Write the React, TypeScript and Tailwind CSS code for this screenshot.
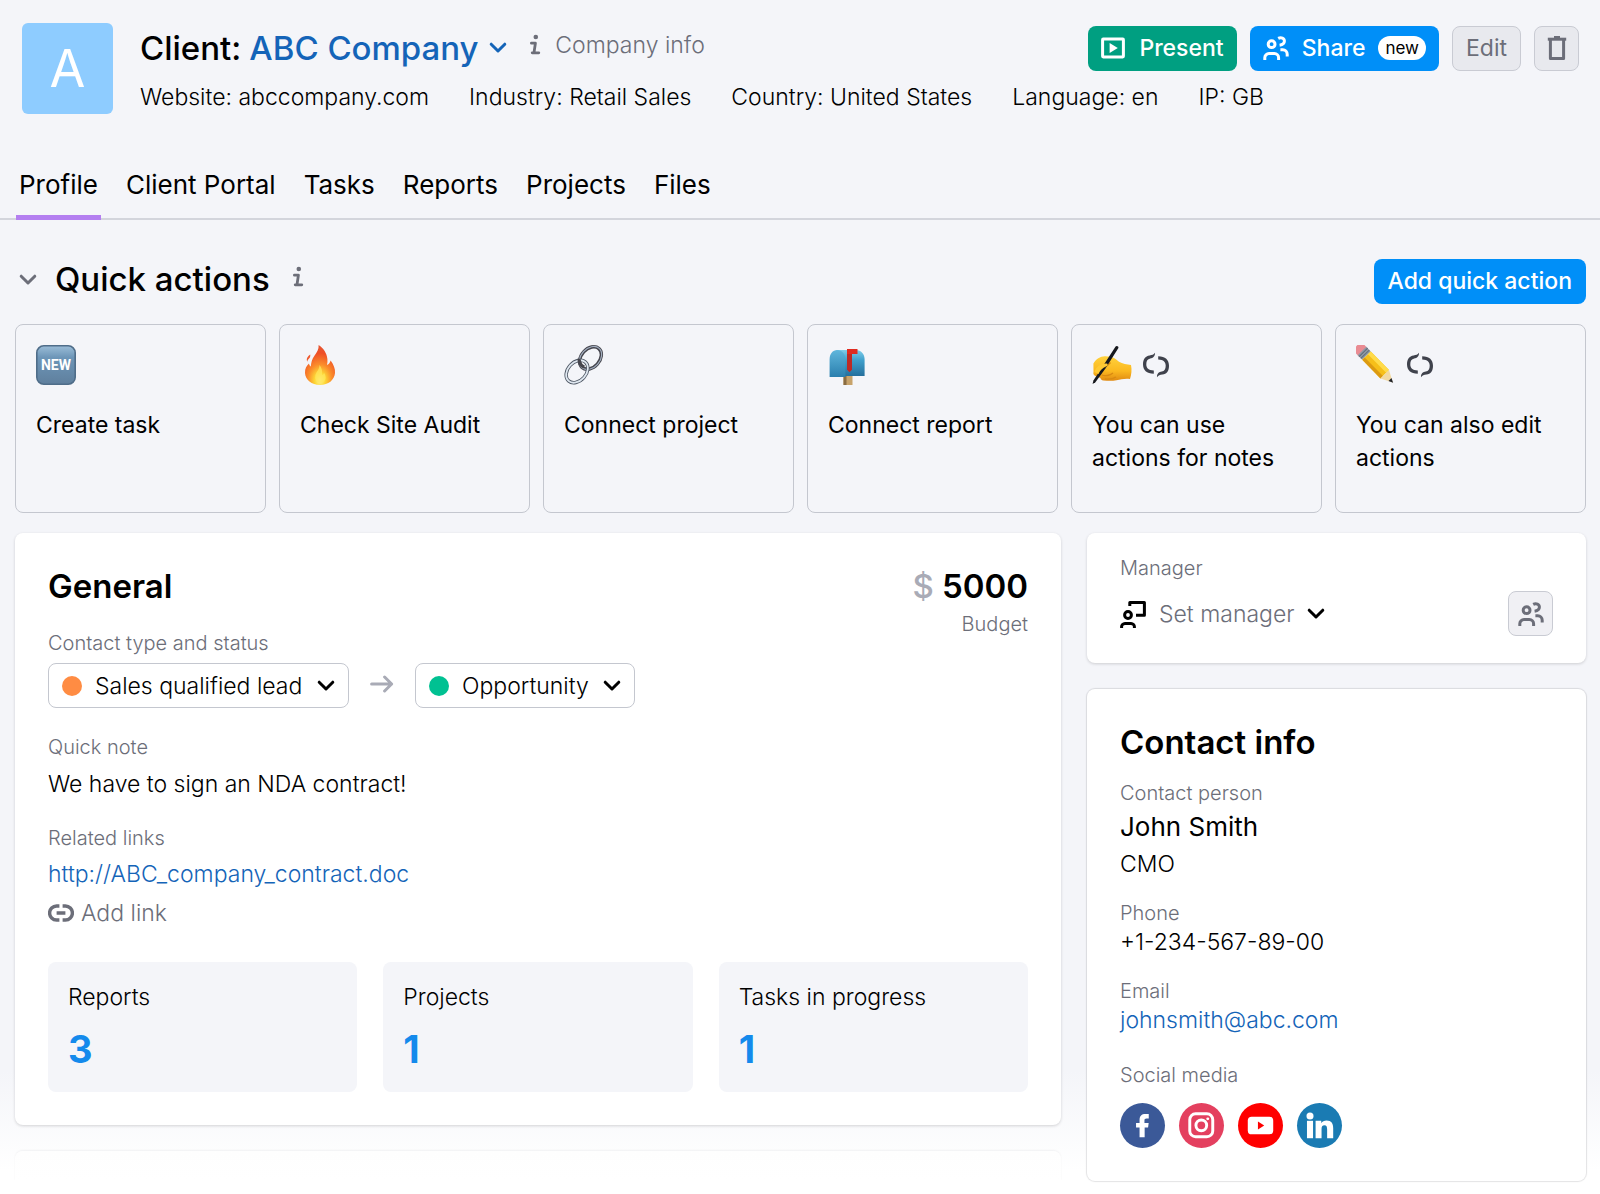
import type { ReactNode } from "react"

const details = [
  { label: "Website", value: "abccompany.com" },
  { label: "Industry", value: "Retail Sales" },
  { label: "Country", value: "United States" },
  { label: "Language", value: "en" },
  { label: "IP", value: "GB" },
]

const tabs = ["Profile", "Client Portal", "Tasks", "Reports", "Projects", "Files"]

const stats = [
  { label: "Reports", value: 3 },
  { label: "Projects", value: 1 },
  { label: "Tasks in progress", value: 1 },
]

function Chevron({ className = "" }: { className?: string }) {
  return (
    <svg viewBox="0 0 18 12" className={`h-3 w-[18px] shrink-0 pointer-events-none ${className}`} fill="none" aria-hidden="true">
      <path d="M2.2 2.2 9 9l6.8-6.8" stroke="currentColor" strokeWidth="3" strokeLinecap="round" strokeLinejoin="round" />
    </svg>
  )
}

function InfoIcon() {
  return (
    <svg viewBox="0 0 12 22" className="h-[22px] w-3 shrink-0 text-[#6c6e79]" fill="none" aria-hidden="true">
      <circle cx="6.8" cy="3" r="2.3" fill="currentColor" />
      <path d="M2.400 9.2h4L5 18.6M3.200 18.800h6.600" stroke="currentColor" strokeWidth="2.8" strokeLinecap="round" strokeLinejoin="round" />
    </svg>
  )
}

function UsersIcon() {
  return (
    <svg viewBox="0 0 26 26" className="h-[26px] w-[26px] shrink-0" fill="none" stroke="currentColor" strokeWidth="3" aria-hidden="true">
      <circle cx="8.6" cy="9.2" r="3.4" />
      <path d="M1.8 25v-2.2a4.2 4.2 0 0 1 4.2-4.2h5.4a4.2 4.2 0 0 1 4.2 4.2V25" />
      <path d="M15.2 3.4c3-1.6 6.2-.2 6.2 2.6 0 2.6-1.8 3.8-4.8 4.2" />
      <path d="M17.4 14.8h2.4a4.4 4.4 0 0 1 4.4 4.4v2.4" />
    </svg>
  )
}

function PresentIcon() {
  return (
    <svg viewBox="0 0 24 22" className="h-[22px] w-6 shrink-0" fill="none" aria-hidden="true">
      <rect x="1.6" y="2.1" width="20.8" height="17.8" rx="0.6" stroke="currentColor" strokeWidth="3" />
      <path d="M8.6 6v10l8.2-5z" fill="currentColor" />
    </svg>
  )
}

function TrashIcon() {
  return (
    <svg viewBox="0 0 20 26" className="h-[26px] w-5" fill="none" stroke="currentColor" strokeWidth="3" aria-hidden="true">
      <path d="M0.8 4.2h18.4" />
      <path d="M7 2.2h6" strokeWidth="2.4" />
      <path d="M3.4 4v19.4h13.2V4" strokeLinejoin="round" />
    </svg>
  )
}

function ManagerIcon() {
  return (
    <svg viewBox="0 0 26 28" className="h-7 w-[26px] shrink-0 text-black" fill="none" stroke="currentColor" strokeWidth="3" aria-hidden="true">
      <circle cx="8" cy="15" r="3.4" />
      <path d="M1.6 28v-1a3.4 3.4 0 0 1 3.4-3.6h6a3.4 3.4 0 0 1 3.4 3.6v1" />
      <path d="M9.8 6V2.6h14.6v12.6H16" strokeLinejoin="round" />
    </svg>
  )
}

function LinkIcon() {
  return (
    <svg viewBox="0 0 26 20" className="h-5 w-[26px] shrink-0" fill="none" stroke="currentColor" strokeWidth="3.4" aria-hidden="true">
      <path d="M11.4 3H8.600a7 7 0 0 0 0 14h2.800M14.600 3h2.800a7 7 0 0 1 0 14h-2.800M8.6 10h8.8" />
    </svg>
  )
}

function LoopIcon() {
  return (
    <svg viewBox="0 0 28 26" className="h-[26px] w-7" fill="#3f424c" aria-hidden="true">
      <path d="M13 .8c.2 3.600-2 5.400-4.800 5.700C5.600 7 4.300 9 4.300 12.300c0 3.900 2.200 6 7.500 6.300v3.200C4.600 21.800 1 18 1 12.300 1 7.200 3.200 4 7.600 3.400 10 3.100 11.600 2.800 13 .8z" />
      <path d="M15 25.200c-.2-3.600 2-5.400 4.800-5.700 2.600-.5 3.900-2.500 3.900-5.800 0-3.900-2.200-6-7.500-6.300V4.200C23.400 4.200 27 8 27 13.700c0 5.100-2.200 8.300-6.600 8.900-2.400.3-4 .6-5.400 2.600z" />
    </svg>
  )
}

function ArrowIcon() {
  return (
    <svg viewBox="0 0 24 18" className="h-[18px] w-6 shrink-0 text-[#a9abb6]" fill="none" stroke="currentColor" strokeWidth="3" strokeLinecap="round" strokeLinejoin="round" aria-hidden="true">
      <path d="M1.600 9h20M14.600 2l7 7-7 7" />
    </svg>
  )
}

function NewEmoji() {
  return (
    <svg viewBox="0 0 40 40" className="h-10 w-10" aria-hidden="true">
      <defs>
        <linearGradient id="newBg" x1="0" y1="0" x2="0" y2="1">
          <stop offset="0" stopColor="#9bbdd8" />
          <stop offset="0.3" stopColor="#6d96b8" />
          <stop offset="1" stopColor="#5f7f9d" />
        </linearGradient>
      </defs>
      <rect x="0.800" y="0.800" width="38.400" height="38.400" rx="7" fill="url(#newBg)" stroke="#4f6d89" strokeWidth="1.600" />
      <text x="20" y="25" textAnchor="middle" fontFamily="Roboto, sans-serif" fontWeight="700" fontSize="14" fill="#fff">NEW</text>
    </svg>
  )
}

function FireEmoji() {
  return (
    <svg viewBox="0 0 40 40" className="h-10 w-10" aria-hidden="true">
      <defs>
        <radialGradient id="fireBg" cx="0.5" cy="0.88" r="0.8">
          <stop offset="0" stopColor="#fff59a" />
          <stop offset="0.22" stopColor="#fdd835" />
          <stop offset="0.5" stopColor="#fb8c2b" />
          <stop offset="0.85" stopColor="#ee4f27" />
          <stop offset="1" stopColor="#e8542f" />
        </radialGradient>
      </defs>
      <path d="M18.600 0c5 3 8.200 8.400 8.800 14 .2 2.200 0 4.200-.4 6 2-1 3-2.600 3.600-4.600 3 4 4.800 8.200 4.400 12.600C34.400 35 28.400 40 20 40S5.400 34.800 5 28c-.2-4.400 1.800-7.400 4-9.400.2 1.400.8 2.400 1.800 3 .4-4 1-7.600 3.800-11.200C17 7.200 19 4.200 18.600 0z" fill="url(#fireBg)" />
      <path d="M10.200 9.400c.6 2.400-.8 3.600-2 5.200-.6.800-.8 1.400-.8 2.200-1.600-2.800.2-5.600 2.800-7.400z" fill="#ef5a30" />
      <path d="M19.400 20c.4 5-4.200 7-4.200 12 0 3.400 2 5.800 5 5.800s5.400-2 5.400-5.400c0-2-.8-3.400-1.600-4.600-.4 1.400-1 2-1.800 2.200.2-4-.4-7.600-2.800-10z" fill="#ffe65c" opacity="0.75" />
    </svg>
  )
}

function ChainEmoji() {
  return (
    <svg viewBox="0 0 40 40" className="h-10 w-10" fill="none" aria-hidden="true">
      <g transform="rotate(-48 26.500 13)">
        <ellipse cx="26.500" cy="13" rx="12.600" ry="9.200" stroke="#45454d" strokeWidth="3.400" />
        <ellipse cx="26.500" cy="13" rx="12.900" ry="9.500" stroke="#a3afc0" strokeWidth="1.200" />
      </g>
      <g transform="rotate(-48 13 26.500)">
        <ellipse cx="13" cy="26.500" rx="12.600" ry="9.200" stroke="#4d5663" strokeWidth="3.400" />
        <ellipse cx="13" cy="26.500" rx="12.600" ry="9.200" stroke="#dfe7f0" strokeWidth="1.800" />
      </g>
      <path d="M15.200 14c-.3 3.500 1.600 6.600 5 8" stroke="#45454d" strokeWidth="3.400" />
    </svg>
  )
}

function MailboxEmoji() {
  return (
    <svg viewBox="0 0 40 40" className="h-10 w-10" aria-hidden="true">
      <defs>
        <linearGradient id="boxSide" x1="0" y1="0" x2="0" y2="1">
          <stop offset="0" stopColor="#7fcdea" />
          <stop offset="0.4" stopColor="#3f9fcb" />
          <stop offset="1" stopColor="#256f9c" />
        </linearGradient>
        <linearGradient id="boxFront" x1="0" y1="0" x2="0" y2="1">
          <stop offset="0" stopColor="#5fb6dc" />
          <stop offset="1" stopColor="#2a7fae" />
        </linearGradient>
      </defs>
      <rect x="15.500" y="30" width="9" height="10" fill="#c7a36b" />
      <rect x="15.500" y="30" width="3" height="10" fill="#8a6c42" />
      <path d="M8 5h20c5 0 8.600 4 8.600 9v17H17V14z" fill="url(#boxSide)" />
      <path d="M1.600 32V14c0-5 3-9 7.600-9s8.200 4 8.200 9v18z" fill="url(#boxFront)" />
      <path d="M19 4h10.500v5H24v15.500L21.500 27 19 24.500z" fill="#e02b20" />
      <path d="M19 9h5v15.500L21.500 27 19 24.500z" fill="#bd2a25" />
    </svg>
  )
}

function WritingEmoji() {
  return (
    <svg viewBox="0 0 40 40" className="h-10 w-10" aria-hidden="true">
      <defs>
        <linearGradient id="handBg" x1="0" y1="0" x2="0" y2="1">
          <stop offset="0" stopColor="#ffd23d" />
          <stop offset="0.6" stopColor="#fbb81f" />
          <stop offset="1" stopColor="#e08a12" />
        </linearGradient>
      </defs>
      <path d="M1.400 18.500c2.600-4.500 7-7.500 12-7.300 5.600.2 9.600 1.400 13.600 5.600 3.500 2.200 8 2.700 12 3.200 1 4.500.5 9.500-1 14-6-.5-9 .5-13.500 1.200-4.500 1-8.500.6-13 .3-2-.3-3-1.200-3-2.500l-5-2c-2-.8-2.500-2.200-2-4z" fill="url(#handBg)" />
      <path d="M9 24c4-2 7-3 9.500-6.500M10 30c3 1.500 8 .5 11-2M13 34c4 .5 8 0 11-2" stroke="#d98a12" strokeWidth="1.300" fill="none" />
      <path d="M23.600 1.600c.8-1.300 3.400-.2 2.800 1.400L13.800 23 11 21z" fill="#16181d" />
      <path d="m11 21 2.800 2L3.400 37.200.6 39l.8-3.400z" fill="#16181d" />
      <path d="M2.500 27c1.500-5.500 6-8.500 11.500-8.500 2 0 2.500 2 .5 2.800C11 22.800 8 25 6.500 29z" fill="#ffca34" />
    </svg>
  )
}

function PencilEmoji() {
  return (
    <svg viewBox="0 0 40 40" className="h-10 w-10" aria-hidden="true">
      <g transform="rotate(45.500 3.500 3.500)">
        <path d="M4-2.500h5v12H4a5 6 0 0 1-4.500-6A5 6 0 0 1 4-2.500z" fill="#e98b93" />
        <rect x="7" y="-2.500" width="6.500" height="12" fill="#8f99a6" />
        <path d="M9-2.500v12M11.500-2.500v12" stroke="#5f6b78" strokeWidth="1" />
        <rect x="13.500" y="-2.500" width="26" height="12" fill="#f6bf1a" />
        <rect x="13.500" y="-2.500" width="26" height="4" fill="#ffdb4a" />
        <rect x="13.500" y="6" width="26" height="3.500" fill="#dc9a12" />
        <path d="M39.500-2.500 51 3.500l-11.500 6z" fill="#f2d9a2" />
        <path d="M47 1.400 51.500 3.500 47 5.600z" fill="#23252b" />
      </g>
    </svg>
  )
}

const actions = [
  { title: "Create task", emoji: <NewEmoji />, loop: false },
  { title: "Check Site Audit", emoji: <FireEmoji />, loop: false },
  { title: "Connect project", emoji: <ChainEmoji />, loop: false },
  { title: "Connect report", emoji: <MailboxEmoji />, loop: false },
  { title: "You can use actions for notes", emoji: <WritingEmoji />, loop: true },
  { title: "You can also edit actions", emoji: <PencilEmoji />, loop: true },
]

const socials = [
  {
    name: "Facebook",
    color: "bg-[#3b5998]",
    icon: <path d="M20 35V25h-3.600v-4.600H20v-3.200c0-4 2.200-6 6-6h3.400v4.600h-2.200c-1.600 0-2.200.7-2.200 2v2.600h4.300l-.6 4.600H25.200v10z" fill="#fff" />,
  },
  {
    name: "Instagram",
    color: "bg-[#e4405f]",
    icon: (
      <g fill="none" stroke="#fff" strokeWidth="3">
        <rect x="11" y="11" width="23.500" height="23.500" rx="6" />
        <circle cx="22.800" cy="22.800" r="5.500" />
        <circle cx="29.400" cy="16.200" r="1.500" fill="#fff" stroke="none" />
      </g>
    ),
  },
  {
    name: "YouTube",
    color: "bg-[#ff0000]",
    icon: (
      <>
        <rect x="10" y="14" width="26" height="18" rx="4" fill="#fff" />
        <path d="M20.400 19v8l6.400-4z" fill="#f00" />
      </>
    ),
  },
  {
    name: "LinkedIn",
    color: "bg-[#1a7bb3]",
    icon: (
      <g fill="#fff">
        <circle cx="13.300" cy="13.200" r="3.600" />
        <rect x="10.200" y="18.200" width="6.200" height="17.800" />
        <path d="M19 18.200h5.800v2.400c1-1.800 3-2.800 5.400-2.800 5 0 6.800 3 6.800 8V36h-6.200v-9c0-2.600-.6-4.200-2.800-4.200s-2.900 1.600-2.900 4V36H19z" />
      </g>
    ),
  },
]

function StatusSelect({ label, value, dot }: { label: string; value: string; dot: string }) {
  return (
    <label className="flex h-[45px] items-center rounded-lg border border-[#c4c7cf] bg-white px-[13px]">
      <span className={`mr-[13px] h-5 w-5 rounded-full ${dot}`} />
      <select aria-label={label} className="appearance-none bg-transparent text-[23px] leading-8 font-light text-black">
        <option>{value}</option>
      </select>
      <Chevron className="ml-3.5" />
    </label>
  )
}

function Label({ children }: { children: ReactNode }) {
  return <p className="text-[20px] leading-7 font-light text-[#6c6e79]">{children}</p>
}

export default function App() {
  return (
    <div className="min-h-screen bg-white font-['Inter',sans-serif] text-black">
      <div className="bg-[linear-gradient(to_bottom,#f4f5f9_0,#f4f5f9_calc(100%-110px),#ffffff_calc(100%-10px))]">
        <header>
          <div className="flex items-start pt-[23px] pr-[21px] pl-[22px]">
            <div className="flex h-[91px] w-[91px] shrink-0 items-center justify-center rounded-md bg-[#8eccff] text-[52px] text-white">A</div>
            <div className="ml-[27px] grow">
              <div className="flex h-[50px] items-center">
                <h1 className="flex items-center gap-2 text-[33px] leading-10 font-medium">
                  Client:
                  <select aria-label="Client" className="appearance-none bg-transparent text-[#1464b8]">
                    <option>ABC Company</option>
                  </select>
                </h1>
                <Chevron className="ml-2.5 text-[#1464b8]" />
                <a href="#company-info" className="ml-[22px] flex items-center gap-3.5 pb-1.5 text-[23px] font-light text-[#6c6e79]">
                  <InfoIcon />
                  Company info
                </a>
                <div className="ml-auto flex gap-[13px]">
                  <button className="flex h-[45px] items-center gap-3.5 rounded-lg bg-[#009f81] px-[13px] text-[23px] font-medium text-white">
                    <PresentIcon />
                    Present
                  </button>
                  <button className="flex h-[45px] items-center gap-[13px] rounded-lg bg-[#008ff8] px-[13px] text-[23px] font-medium text-white">
                    <UsersIcon />
                    Share
                    <span className="rounded-full bg-white px-[7px] text-[17px] leading-6 font-normal text-black">new</span>
                  </button>
                  <button className="h-[45px] rounded-lg border border-[#c9cbd3] bg-[#e8e9ee] px-[13px] text-[23px] text-[#6c6e79]">Edit</button>
                  <button aria-label="Delete" className="flex h-[45px] w-[45px] items-center justify-center rounded-lg border border-[#c9cbd3] bg-[#e8e9ee] text-[#6c6e79]">
                    <TrashIcon />
                  </button>
                </div>
              </div>
              <ul className="flex flex-wrap gap-x-10 text-[23px] leading-[48px] font-light">
                {details.map((d) => (
                  <li key={d.label}>
                    {d.label}: {d.value}
                  </li>
                ))}
              </ul>
            </div>
          </div>

          <nav className="mt-12 flex gap-[22px] border-b-2 border-[#d3d5dc] px-4">
            {tabs.map((tab, i) => (
              <a
                key={tab}
                href="#"
                className={`-mb-[2px] border-b-5 px-[3px] pb-3.5 text-[26px] leading-8 ${i === 0 ? "border-[#b47ff0]" : "border-transparent"}`}
              >
                {tab}
              </a>
            ))}
          </nav>
        </header>

        <main className="pt-[39px] pr-3.5 pl-[15px]">
          <section>
            <div className="flex h-[45px] items-center">
              <button aria-label="Collapse quick actions" className="ml-1 pb-1 text-[#6c6e79]">
                <Chevron />
              </button>
              <h2 className="ml-[18px] pb-1.5 text-[33px] leading-10 font-medium">Quick actions</h2>
              <button aria-label="About quick actions" className="ml-[22px] pb-2.5">
                <InfoIcon />
              </button>
              <button className="ml-auto h-[45px] rounded-lg bg-[#008ff8] px-3.5 text-[23px] font-medium text-white">Add quick action</button>
            </div>

            <div className="mt-5 grid grid-cols-6 gap-[13px]">
              {actions.map((action) => (
                <button key={action.title} className="flex h-[189px] flex-col items-start rounded-lg border border-[#c4c7cf] px-5 pt-5 text-left">
                  <span className="flex items-center gap-2.5">
                    {action.emoji}
                    {action.loop && <LoopIcon />}
                  </span>
                  <span className="mt-6 text-[23px] leading-[33px]">{action.title}</span>
                </button>
              ))}
            </div>
          </section>

          <div className="mt-5 flex items-start gap-[26px]">
            <div className="grow">
              <section className="rounded-lg bg-white p-[33px] shadow-[0_1px_3px_rgba(25,27,35,0.18)]">
                <div className="flex items-start justify-between">
                  <h2 className="text-[33px] leading-10 font-semibold">General</h2>
                  <div className="text-right">
                    <p className="flex gap-2 text-[33px] leading-10 font-semibold">
                      <span className="font-medium text-[#a9abb6]">$</span>
                      5000
                    </p>
                    <div className="mt-1">
                      <Label>Budget</Label>
                    </div>
                  </div>
                </div>
                <div className="-mt-[9px]">
                  <Label>Contact type and status</Label>
                </div>
                <div className="mt-1.5 flex items-center">
                  <StatusSelect label="Contact type" value="Sales qualified lead" dot="bg-[#ff8c43]" />
                  <span className="mx-[21px] pb-1">
                    <ArrowIcon />
                  </span>
                  <StatusSelect label="Contact status" value="Opportunity" dot="bg-[#00c192]" />
                </div>

                <div className="mt-[25px]">
                  <Label>Quick note</Label>
                  <p className="mt-2 text-[23px] leading-[30px] font-light">We have to sign an NDA contract!</p>
                </div>
                <div className="mt-[25px]">
                  <Label>Related links</Label>
                  <a href="#contract" className="mt-[7px] block text-[23px] leading-[30px] font-light text-[#1464b8]">
                    http://ABC_company_contract.doc
                  </a>
                  <button className="mt-[9px] flex items-center gap-[7px] text-[23px] leading-[30px] font-light text-[#6c6e79]">
                    <LinkIcon />
                    Add link
                  </button>
                </div>

                <div className="mt-[34px] grid grid-cols-3 gap-[26px]">
                  {stats.map((stat) => (
                    <div key={stat.label} className="h-[130px] rounded-lg bg-[#f4f5f9] px-5 pt-5">
                      <p className="text-[23px] leading-[30px] font-light">{stat.label}</p>
                      <p className="mt-3 text-[38px] leading-[50px] font-bold text-[#148aec]">{stat.value}</p>
                    </div>
                  ))}
                </div>
              </section>
              <section className="mt-[26px] h-[30px] rounded-t-lg bg-[linear-gradient(to_bottom,#fefefe,#ffffff)] shadow-[0_-1px_2px_rgba(25,27,35,0.05)]" />
            </div>

            <aside className="flex w-[499px] shrink-0 flex-col gap-[26px]">
              <section className="h-[130px] rounded-lg bg-white px-[33px] pt-[21px] shadow-[0_1px_3px_rgba(25,27,35,0.18)]">
                <Label>Manager</Label>
                <div className="mt-[9px] flex h-[45px] items-center">
                  <label className="flex items-center">
                    <ManagerIcon />
                    <select aria-label="Manager" className="ml-[13px] appearance-none bg-transparent text-[23px] leading-8 font-light text-[#6c6e79]">
                      <option>Set manager</option>
                    </select>
                    <Chevron className="ml-3" />
                  </label>
                  <button aria-label="Team" className="ml-auto flex h-[45px] w-[45px] items-center justify-center rounded-lg border border-[#c9cbd3] bg-[#f0f0f4] text-[#6c6e79]">
                    <UsersIcon />
                  </button>
                </div>
              </section>

              <section className="rounded-lg bg-white p-[33px] shadow-[0_0_1px_1px_rgba(25,27,35,0.12)]">
                <h2 className="text-[33px] leading-10 font-semibold">Contact info</h2>
                <div className="mt-[17px]">
                  <Label>Contact person</Label>
                  <p className="mt-1 text-[26px] leading-8">John Smith</p>
                  <p className="mt-1.5 text-[23px] leading-[30px] font-light">CMO</p>
                </div>
                <div className="mt-5">
                  <Label>Phone</Label>
                  <p className="text-[23px] leading-[30px] font-light">+1-234-567-89-00</p>
                </div>
                <div className="mt-5">
                  <Label>Email</Label>
                  <a href="mailto:johnsmith@abc.com" className="block text-[23px] leading-[30px] font-light text-[#1464b8]">
                    johnsmith@abc.com
                  </a>
                </div>
                <div className="mt-[26px]">
                  <Label>Social media</Label>
                  <div className="mt-3.5 flex gap-3.5">
                    {socials.map((s) => (
                      <a key={s.name} href="#" aria-label={s.name} className={`h-[45px] w-[45px] rounded-full ${s.color}`}>
                        <svg viewBox="0 0 46 46" className="h-full w-full">
                          {s.icon}
                        </svg>
                      </a>
                    ))}
                  </div>
                </div>
              </section>
            </aside>
          </div>
        </main>
      </div>
    </div>
  )
}
